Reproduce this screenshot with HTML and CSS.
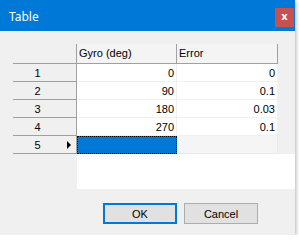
FILE: index.html
```html
<!DOCTYPE html>
<html>

<head>
    <title>Table</title>
    <link rel="stylesheet" href="styles.css">
</head>

<body>

    <div class="window">

        <div class="titlebar">
            <span class="title">Table</span>
            <span class="close">x</span>
        </div>

        <div class="content">

            <div class="grid">
                <div class="corner"></div>
                <div class="colhead">Gyro (deg)</div>
                <div class="colhead">Error</div>
                <div class="filler"></div>

                <div class="rowhead"><span class="num">1</span><span class="mark"></span></div>
                <div class="cell">0</div>
                <div class="cell">0</div>
                <div class="filler"></div>

                <div class="rowhead"><span class="num">2</span><span class="mark"></span></div>
                <div class="cell">90</div>
                <div class="cell">0.1</div>
                <div class="filler"></div>

                <div class="rowhead"><span class="num">3</span><span class="mark"></span></div>
                <div class="cell">180</div>
                <div class="cell">0.03</div>
                <div class="filler"></div>

                <div class="rowhead"><span class="num">4</span><span class="mark"></span></div>
                <div class="cell">270</div>
                <div class="cell">0.1</div>
                <div class="filler"></div>

                <div class="rowhead"><span class="num">5</span><span class="mark"><i class="arrow"></i></span></div>
                <div class="cell selected"></div>
                <div class="cell newrow"></div>
                <div class="filler"></div>

                <div class="blank-left"></div>
                <div class="blank"></div>
            </div>

            <div class="buttons">
                <button class="btn default">OK</button>
                <button class="btn">Cancel</button>
            </div>

        </div>

    </div>

</body>

</html>
```

FILE: styles.css
```css
body {
    margin: 0;
    background: #ffffff;
    font-family: "Liberation Sans", Arial, sans-serif;
    font-size: 11px;
    color: #000000;
}

.window {
    width: 295px;
    height: 235px;
    background: #f0f0f0;
    box-shadow: 1px 1px 4px rgba(0, 0, 0, 0.3);
}

.titlebar {
    height: 31px;
    background: #0078d7;
    display: flex;
    align-items: center;
    justify-content: space-between;
    padding-left: 9px;
    padding-right: 1px;
}

.title {
    font-family: "Noto Sans", "Open Sans", sans-serif;
    font-size: 12px;
    color: #ffffff;
    margin-top: 1px;
}

.close {
    width: 19px;
    height: 19px;
    background: #c75050;
    color: #ffffff;
    font-family: "DejaVu Sans", sans-serif;
    font-size: 10px;
    font-weight: bold;
    display: flex;
    align-items: center;
    justify-content: center;
    line-height: 1;
    padding-bottom: 1px;
    box-sizing: border-box;
    margin-top: 4px;
}

.content {
    padding: 13px 0 0 13px;
}

.grid {
    display: grid;
    grid-template-columns: 64px 100px 101px 17px;
    grid-template-rows: 20px repeat(5, 18px) 35px;
}

.grid > div {
    box-sizing: border-box;
}

.corner {
    background: #f0f0f0;
    border-right: 1px solid #a0a0a0;
    border-bottom: 1px solid #a0a0a0;
}

.colhead {
    background: #f4f4f4;
    border-right: 1px solid #a0a0a0;
    border-bottom: 1px solid #a0a0a0;
    padding-left: 2px;
    display: flex;
    align-items: center;
    padding-bottom: 1px;
}

.filler {
    background: #f0f0f0;
}

.rowhead {
    background: #f0f0f0;
    border-right: 1px solid #a0a0a0;
    border-bottom: 1px solid #a0a0a0;
    display: flex;
    align-items: center;
}

.rowhead .num {
    flex: 1;
    text-align: center;
}

.rowhead .mark {
    width: 14px;
    padding-left: 5px;
    box-sizing: border-box;
    display: flex;
    align-items: center;
}

.arrow {
    width: 0;
    height: 0;
    border-left: 4px solid #000000;
    border-top: 4px solid transparent;
    border-bottom: 4px solid transparent;
}

.cell {
    background: #ffffff;
    border-right: 1px solid #f0f0f0;
    border-bottom: 1px solid #f0f0f0;
    text-align: right;
    padding-right: 2px;
    display: flex;
    align-items: center;
    justify-content: flex-end;
}

.cell.selected {
    background: #0078d7;
    border: 1px dotted #000000;
}

.cell.newrow {
    background: #f5f5f5;
    border-color: #eaeaea;
}

.blank-left {
    background: #f0f0f0;
}

.blank {
    grid-column: 2 / 5;
    background: #ffffff;
}

.buttons {
    display: flex;
    gap: 7px;
    margin-top: 14px;
    padding-left: 90px;
}

.btn {
    width: 74px;
    height: 21px;
    background: #e1e1e1;
    border: 1px solid #adadad;
    font-family: "Liberation Sans", Arial, sans-serif;
    font-size: 11px;
    color: #000000;
    padding: 0;
}

.btn.default {
    border: 2px solid #0078d7;
}
```
